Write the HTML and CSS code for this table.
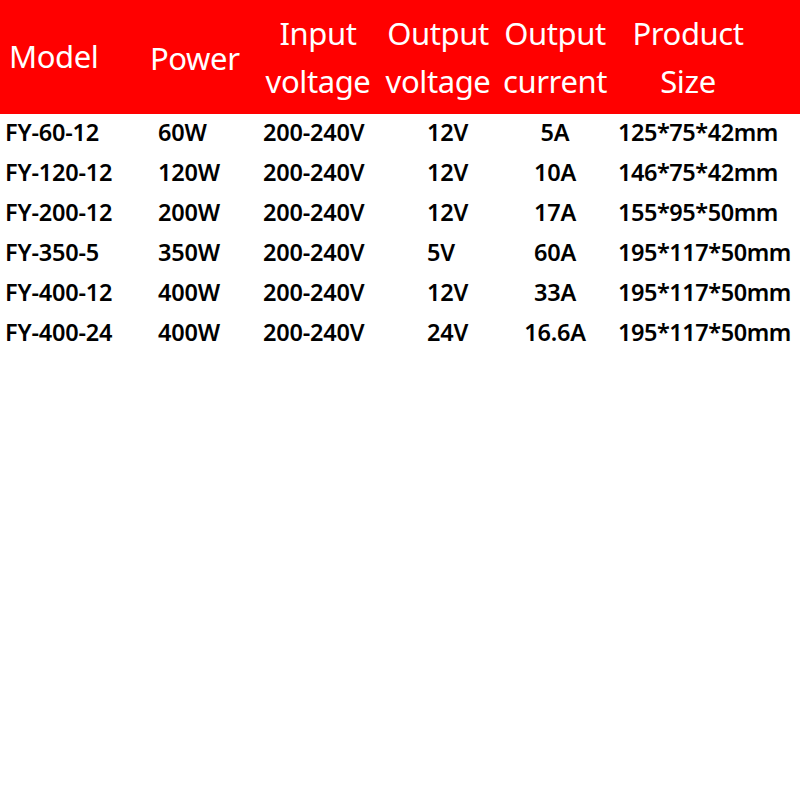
FILE: index.html
```html
<!DOCTYPE html>
<html lang="en">
<head>
<meta charset="utf-8">
<title>Specifications</title>
<link rel="stylesheet" href="styles.css">
</head>
<body>
<div class="spec">
  <div class="head">
    <div class="h h-model">Model</div>
    <div class="h h-power">Power</div>
    <div class="h h-in">Input<br>voltage</div>
    <div class="h h-ov">Output<br>voltage</div>
    <div class="h h-oc">Output<br>current</div>
    <div class="h h-size">Product<br>Size</div>
  </div>
  <div class="body">
    <div class="c c-model">FY-60-12</div><div class="c c-power">60W</div><div class="c c-in">200-240V</div><div class="c c-ov">12V</div><div class="c c-oc">5A</div><div class="c c-size">125*75*42mm</div>
    <div class="c c-model">FY-120-12</div><div class="c c-power">120W</div><div class="c c-in">200-240V</div><div class="c c-ov">12V</div><div class="c c-oc">10A</div><div class="c c-size">146*75*42mm</div>
    <div class="c c-model">FY-200-12</div><div class="c c-power">200W</div><div class="c c-in">200-240V</div><div class="c c-ov">12V</div><div class="c c-oc">17A</div><div class="c c-size">155*95*50mm</div>
    <div class="c c-model">FY-350-5</div><div class="c c-power">350W</div><div class="c c-in">200-240V</div><div class="c c-ov">5V</div><div class="c c-oc">60A</div><div class="c c-size">195*117*50mm</div>
    <div class="c c-model">FY-400-12</div><div class="c c-power">400W</div><div class="c c-in">200-240V</div><div class="c c-ov">12V</div><div class="c c-oc">33A</div><div class="c c-size">195*117*50mm</div>
    <div class="c c-model">FY-400-24</div><div class="c c-power">400W</div><div class="c c-in">200-240V</div><div class="c c-ov">24V</div><div class="c c-oc">16.6A</div><div class="c c-size">195*117*50mm</div>
  </div>
</div>
</body>
</html>
```
FILE: styles.css
```css
html, body {
  margin: 0;
  padding: 0;
  background: #ffffff;
}
body {
  font-family: "Noto Sans", "Open Sans", sans-serif;
}
.spec {
  width: 800px;
}
.head, .body {
  display: grid;
  grid-template-columns: 150px 108px 120px 120px 114px 188px;
}
.head {
  height: 114px;
  background: #ff0000;
  color: #ffffff;
  align-items: center;
}
.h {
  font-size: 31px;
  line-height: 48px;
  font-weight: 400;
  letter-spacing: -0.4px;
  white-space: nowrap;
}
.h-model { padding-left: 9px; padding-bottom: 2px; }
.h-power { padding-left: 0; padding-top: 2px; }
.h-in, .h-ov, .h-oc { text-align: center; }
.h-size { text-align: center; padding-right: 36px; }

.body {
  row-gap: 4px;
  color: #000000;
}
.c {
  font-size: 23.5px;
  line-height: 36px;
  font-weight: 600;
  letter-spacing: -0.2px;
  white-space: nowrap;
}
.c-model { padding-left: 5px; }
.c-power { padding-left: 8px; }
.c-in { padding-left: 5px; }
.c-ov { padding-left: 49px; }
.c-oc { text-align: center; }
.c-size { padding-left: 6px; letter-spacing: -0.45px; }
```
